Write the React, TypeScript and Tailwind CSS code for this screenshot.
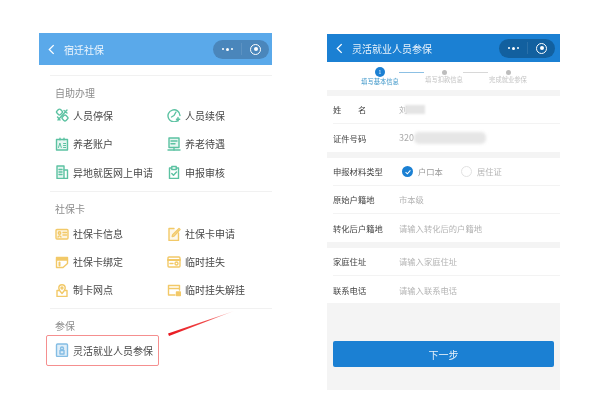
import React from "react";

const font = { fontFamily: '"Noto Sans CJK SC", "Liberation Sans", sans-serif' };

type IconProps = { c: string; kind: string };
function Icon({ c, kind }: IconProps) {
  const s = { fill: "none", stroke: c, strokeWidth: 1.4, strokeLinecap: "round" as const, strokeLinejoin: "round" as const };
  const shapes: Record<string, React.ReactNode> = {
    sat: (<g {...s}><rect x="2" y="1.5" width="5" height="5" rx="1.5" transform="rotate(45 4.5 4)" /><rect x="7.5" y="7.5" width="5" height="5" rx="1.5" transform="rotate(45 10 10)" /><path d="M3 12l9-10M9 2.500l3 2.500M2.500 9l2.500 3" /></g>),
    clock: (<g {...s}><path d="M11 12.300A6 6 0 1 1 13 7.500" /><path d="M9 4L7 7.500 4.500 9" /><path d="M11 9.500v3.500M9.500 11.200h3.200" /></g>),
    ai: (<g {...s}><rect x="1.500" y="2.500" width="11" height="10.500" fill={c} fillOpacity={0.15} /><path d="M5 1.200v1.500M9 1.200v1.500" /><path d="M3.500 10.500l1.400-4.500 1.400 4.500M8.500 6.500h2.200M8.500 8.500h2.200M8.500 10.500h2.200" strokeWidth={1} /></g>),
    screen: (<g {...s}><rect x="2" y="1" width="10" height="9.500" fill={c} fillOpacity={0.15} /><path d="M4 4h6M4 6.800h4M1 13h12" /><path d="M7 10.500V13" /></g>),
    doc: (<g {...s}><path d="M2 1h7v12.500H2z" fill={c} fillOpacity={0.15} /><path d="M9 5h3.500v8.500H9M4 4.500h3M4 7h3M4 9.500h3" /></g>),
    clip: (<g {...s}><path d="M4.500 3H2.500v10.500h9V3H9.500M4.800 1.500h4.400V4.500H4.800zM4.800 8.500l1.700 1.800 3-3.200" /></g>),
    card: (<g {...s}><rect x="1" y="2.500" width="12" height="9.500" rx="1" fill={c} fillOpacity={0.2} /><circle cx="4.500" cy="6" r="1.200" /><path d="M3 10c.5-1.500 2.500-1.500 3 0M8 5.500h3.500M8 8h3.500" /></g>),
    pen: (<g {...s}><path d="M7 1.500H2V13.500h9.500V6" fill={c} fillOpacity={0.15} /><path d="M12 1.500l1 1-6 6.500-1.800.6.500-1.900z" /></g>),
    note: (<g {...s}><path d="M1.500 2.500h11V5h-11z" fill={c} /><path d="M1.500 5v7.500H8l4.500-4V5" /><path d="M4.500 7.500v3" strokeWidth={2} /></g>),
    wallet: (<g {...s}><rect x="1" y="2" width="12" height="10" rx="1" /><path d="M1 5h12" strokeWidth={2} /><circle cx="9.500" cy="8.500" r="1.500" /><path d="M3 8.500h3" /></g>),
    pin: (<g {...s}><path d="M4 7.500H2V13.500h10V7.500h-2" /><path d="M7 10.500C5 8.500 3.800 6.800 3.800 5a3.200 3.200 0 0 1 6.400 0c0 1.800-1.200 3.500-3.200 5.500z" /><circle cx="7" cy="5" r="1" /></g>),
    lock: (<g {...s}><path d="M8 12H1.500V2.500h11V7M1.500 5.500h11" /><rect x="9.500" y="9" width="3.800" height="3.500" fill={c} /></g>),
    person: (<g {...s}><rect x="1.500" y="1" width="11" height="12.500" rx="1" fill={c} fillOpacity={0.25} /><circle cx="7" cy="5.500" r="1.500" /><rect x="5" y="7.500" width="4" height="3.500" /></g>),
  };
  return (
    <svg viewBox="0 0 14 14" className="w-[14px] h-[14px] shrink-0">
      {shapes[kind]}
    </svg>
  );
}

const G = "#5cc2a2";
const Y = "#f2c968";
const B = "#84bde4";

function Item({ c, kind, t }: { c: string; kind: string; t: string }) {
  return (
    <div className="flex items-center gap-[4px] text-[10px] text-[#484848]">
      <Icon c={c} kind={kind} />
      <span className="whitespace-nowrap">{t}</span>
    </div>
  );
}

function Capsule({ bg }: { bg: string }) {
  return (
    <div className="flex items-center h-[19px] w-[56px] rounded-full" style={{ background: bg }}>
      <div className="flex-1 flex items-center justify-center gap-[2px]">
        <span className="w-[2px] h-[2px] rounded-full bg-white" />
        <span className="w-[3px] h-[3px] rounded-full bg-white" />
        <span className="w-[2px] h-[2px] rounded-full bg-white" />
      </div>
      <div className="w-px h-[12px] bg-white/10" />
      <div className="w-[27px] flex items-center justify-center">
        <span className="w-[11px] h-[11px] rounded-full border-[1.5px] border-white flex items-center justify-center">
          <span className="w-[4px] h-[4px] rounded-full bg-white" />
        </span>
      </div>
    </div>
  );
}

function Chevron() {
  return (
    <svg viewBox="0 0 8 12" className="w-[7px] h-[11px]">
      <path d="M6.500 1L1.500 6l5 5" fill="none" stroke="#fff" strokeWidth="1.500" />
    </svg>
  );
}

function Row({ label, value, last, children }: { label?: string; value?: string; last?: boolean; children?: React.ReactNode }) {
  return (
    <div className="pl-[6px]">
      <div className={"h-[28px] flex items-center " + (last ? "" : "border-b border-[#f3f3f3]")}>
        <span className="w-[66px] text-[8.300px] text-[#444] whitespace-pre">{label}</span>
        {children ?? <span className="text-[8.300px] text-[#b4b4b4]">{value}</span>}
      </div>
    </div>
  );
}

function Step({ t, active }: { t: string; active?: boolean }) {
  return (
    <div className="w-[40px] flex flex-col items-center">
      {active ? (
        <span className="w-[10px] h-[10px] rounded-full bg-[#1b80d3] text-white text-[5px] leading-[10px] text-center">1</span>
      ) : (
        <span className="w-[5px] h-[5px] rounded-full bg-[#bdbdbd] my-[2.500px]" />
      )}
      <span className={"text-[6.300px] whitespace-nowrap leading-[9px] " + (active ? "text-[#3d96c9]" : "text-[#c4c4c4] -mt-[2.500px]")}>{t}</span>
    </div>
  );
}

export default function App() {
  return (
    <div className="relative w-[600px] h-[405px] bg-white flex overflow-hidden blur-[0.5px]" style={font}>
      {/* Left phone */}
      <div className="ml-[39px] mt-[33px] w-[233px] h-[340px]">
        <div className="h-[32px] bg-[#5aa9ea] flex items-center pl-[9px] pr-[3px]">
          <Chevron />
          <span className="ml-[9px] text-[10px] text-white/90">宿迁社保</span>
          <div className="ml-auto"><Capsule bg="#4a86bb" /></div>
        </div>
        <div className="ml-[11px] mt-[10px] border-t border-[#f1f1f1]">
          <div className="pl-[5px]">
            <div className="mt-[6px] h-[20px] flex items-center text-[10px] text-[#8c8c8c]">自助办理</div>
            <div className="-mt-[1px] grid grid-cols-[112px_1fr] auto-rows-[28.500px] items-center">
              <Item c={G} kind="sat" t="人员停保" />
              <Item c={G} kind="clock" t="人员续保" />
              <Item c={G} kind="ai" t="养老账户" />
              <Item c={G} kind="screen" t="养老待遇" />
              <Item c={G} kind="doc" t="异地就医网上申请" />
              <Item c={G} kind="clip" t="申报审核" />
            </div>
          </div>
        </div>
        <div className="ml-[11px] mt-[4px] border-t border-[#f1f1f1]">
          <div className="pl-[5px]">
            <div className="mt-[7px] h-[20px] flex items-center text-[10px] text-[#8c8c8c]">社保卡</div>
            <div className="mt-[1px] grid grid-cols-[112px_1fr] auto-rows-[28px] items-center">
              <Item c={Y} kind="card" t="社保卡信息" />
              <Item c={Y} kind="pen" t="社保卡申请" />
              <Item c={Y} kind="note" t="社保卡绑定" />
              <Item c={Y} kind="wallet" t="临时挂失" />
              <Item c={Y} kind="pin" t="制卡网点" />
              <Item c={Y} kind="lock" t="临时挂失解挂" />
            </div>
          </div>
        </div>
        <div className="ml-[11px] mt-[4px] border-t border-[#f1f1f1]">
          <div className="pl-[5px]">
            <div className="mt-[7px] h-[19px] flex items-center text-[10px] text-[#8c8c8c]">参保</div>
            <div className="-ml-[9px] w-[113px] h-[31px] border-[1.500px] border-[#f58f8f] rounded-[2px] flex items-center pl-[8px]">
              <Item c={B} kind="person" t="灵活就业人员参保" />
            </div>
          </div>
        </div>
      </div>

      {/* Right phone */}
      <div className="ml-[55px] mt-[34px] w-[233px] h-[356px] bg-[#f4f4f4] flex flex-col">
        <div className="h-[28px] bg-[#1b80d3] flex items-center pl-[9px] pr-[5px]">
          <Chevron />
          <span className="ml-[9px] text-[10px] text-white/90">灵活就业人员参保</span>
          <div className="ml-auto"><Capsule bg="#12609f" /></div>
        </div>
        <div className="h-[28px] bg-white flex items-start pt-[5px] pl-[33px]">
          <Step t="填写基本信息" active />
          <div className="w-[25px] h-px bg-[#8cc0e4] mt-[5px] -ml-[1px]" />
          <Step t="填写扣款信息" />
          <div className="w-[25px] h-px bg-[#d8d8d8] mt-[5px] -ml-[1px]" />
          <Step t="完成就业参保" />
        </div>
        <div className="h-[6px]" />
        <div className="bg-white">
          <Row label={"姓\u3000\u3000名"}>
            <span className="text-[8.300px] text-[#aaa]">刘</span>
            <span className="-ml-[2px] w-[20px] h-[9px] bg-[#e4e4e4] blur-[1px]" />
          </Row>
          <Row label="证件号码" last>
            <span className="text-[9px] text-[#aaa]">320</span>
            <span className="w-[72px] h-[12px] bg-[#e6e6e6] rounded-[5px] blur-[1.500px]" />
          </Row>
        </div>
        <div className="h-[6px]" />
        <div className="bg-white">
          <Row label="申报材料类型">
            <span className="ml-[3px] w-[11px] h-[11px] rounded-full bg-[#1b80d3] flex items-center justify-center">
              <svg viewBox="0 0 10 10" className="w-[8px] h-[8px]"><path d="M2 5.200l2.200 2L8 3" fill="none" stroke="#fff" strokeWidth="1.300" /></svg>
            </span>
            <span className="ml-[5px] text-[8.300px] text-[#999]">户口本</span>
            <span className="ml-[18px] w-[11px] h-[11px] rounded-full border border-[#e2e2e2]" />
            <span className="ml-[5px] text-[8.300px] text-[#b4b4b4]">居住证</span>
          </Row>
          <Row label="原始户籍地" value="市本级" />
          <Row label="转化后户籍地" value="请输入转化后的户籍地" last />
        </div>
        <div className="h-[6px]" />
        <div className="bg-white h-[55px] overflow-hidden">
          <Row label="家庭住址" value="请输入家庭住址" />
          <Row label="联系电话" value="请输入联系电话" last />
        </div>
        <div className="mt-[38px] mx-[6px] h-[26px] rounded-[2px] bg-[#1b80d3] flex items-center justify-center text-[10px] text-white/90">下一步</div>
      </div>

      {/* Annotation arrow */}
      <svg className="absolute left-[160px] top-[305px] w-[80px] h-[36px]" viewBox="0 0 80 36">
        <defs>
          <linearGradient id="a" x1="0" y1="1" x2="1" y2="0">
            <stop offset="0" stopColor="#e8141c" />
            <stop offset="0.6" stopColor="#f04a4a" />
            <stop offset="1" stopColor="#fbd0d0" />
          </linearGradient>
        </defs>
        <polygon points="8,28.500 74,6 9,31" fill="url(#a)" />
      </svg>
    </div>
  );
}
